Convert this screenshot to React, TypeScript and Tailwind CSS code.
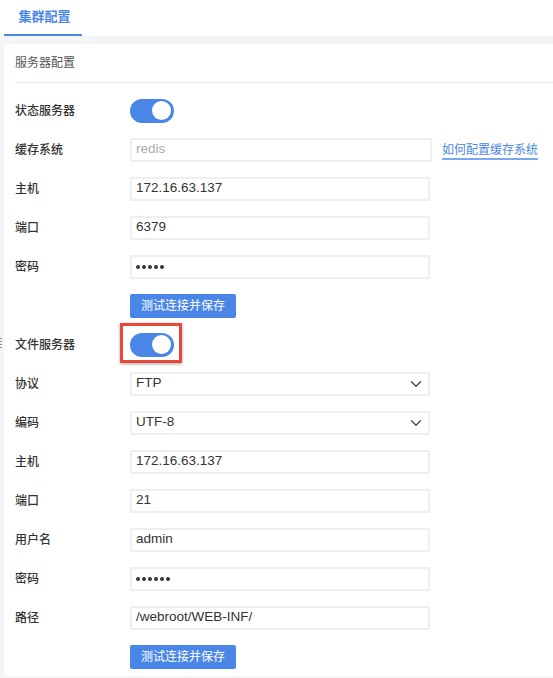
import { ChevronDown } from 'lucide-react'

const font = { fontFamily: '"Liberation Sans", "Noto Sans CJK SC", sans-serif' }

function Toggle() {
  return (
    <div className="flex h-[24px] w-[44px] items-center justify-end rounded-full bg-[#4a86e8] px-[3px]">
      <div className="h-[19px] w-[19px] rounded-full bg-white" />
    </div>
  )
}

function Row({ label, children }: { label: string; children: React.ReactNode }) {
  return (
    <div className="flex h-[39px] items-center">
      <div className="w-[115px] text-[12px] font-medium text-[#333]">{label}</div>
      {children}
    </div>
  )
}

function Field({ value, muted, wide }: { value: string; muted?: boolean; wide?: boolean }) {
  return (
    <div
      className={`flex h-[24px] items-center border-2 border-[#efefef] px-[4px] text-[13.5px] ${wide ? 'w-[302px]' : 'w-[300px]'} ${muted ? 'text-[#aaa]' : 'text-[#333]'}`}
    >
      {value}
    </div>
  )
}

function Dots({ n }: { n: number }) {
  return (
    <div className="flex h-[24px] w-[300px] items-center gap-[2px] border-2 border-[#efefef] px-[4px]">
      {Array.from({ length: n }).map((_, i) => (
        <span key={i} className="h-[4px] w-[4px] rounded-full bg-[#333]" />
      ))}
    </div>
  )
}

function Select({ value }: { value: string }) {
  return (
    <div className="flex h-[24px] w-[300px] items-center justify-between border-2 border-[#efefef] pl-[4px] pr-[3px] text-[13.5px] text-[#333]">
      <span>{value}</span>
      <ChevronDown size={18} strokeWidth={1.6} className="text-[#3a4050]" />
    </div>
  )
}

function Btn() {
  return (
    <div className="flex h-[39px] items-center pl-[115px]">
      <div className="flex h-[24px] w-[106px] items-center justify-center rounded-[2px] bg-[#4a86e8] text-[12px] text-white">
        测试连接并保存
      </div>
    </div>
  )
}

export default function App() {
  return (
    <div className="relative h-[678px] w-[553px] overflow-hidden bg-[#f4f5f7]" style={font}>
      <div className="flex h-[36px] bg-white pl-[4px]">
        <div className="flex w-[78px] items-center justify-center border-b-2 border-[#4a86e8] pl-[3px] text-[13px] font-bold text-[#4a86e8]">
          集群配置
        </div>
      </div>
      <div className="ml-[4px] mt-[8px] bg-white pl-[11px]">
        <div className="flex h-[39px] items-center border-b border-[#e8e8e8] text-[12px] text-[#555]">
          服务器配置
        </div>
        <div className="pt-[8px]">
          <Row label="状态服务器">
            <Toggle />
          </Row>
          <Row label="缓存系统">
            <Field value="redis" muted wide />
            <span className="ml-[10px] mt-[4px] border-b-2 border-[#7aa7ee] text-[12px] leading-[15px] text-[#4a86e8]">
              如何配置缓存系统
            </span>
          </Row>
          <Row label="主机">
            <Field value="172.16.63.137" />
          </Row>
          <Row label="端口">
            <Field value="6379" />
          </Row>
          <Row label="密码">
            <Dots n={5} />
          </Row>
          <Btn />
          <Row label="文件服务器">
            <div className="relative">
              <Toggle />
              <div className="absolute -left-[10px] -top-[10px] h-[40px] w-[62px] border-[3px] border-[#e8483a] shadow-[0_1px_3px_rgba(0,0,0,0.35)]" />
            </div>
          </Row>
          <Row label="协议">
            <Select value="FTP" />
          </Row>
          <Row label="编码">
            <Select value="UTF-8" />
          </Row>
          <Row label="主机">
            <Field value="172.16.63.137" />
          </Row>
          <Row label="端口">
            <Field value="21" />
          </Row>
          <Row label="用户名">
            <Field value="admin" />
          </Row>
          <Row label="密码">
            <Dots n={6} />
          </Row>
          <Row label="路径">
            <Field value="/webroot/WEB-INF/" />
          </Row>
          <Btn />
        </div>
      </div>
      <div className="absolute left-0 top-[338px] flex w-[2px] flex-col gap-[2px]">
        <span className="h-px bg-[#8a8f99]" />
        <span className="h-px bg-[#8a8f99]" />
        <span className="h-px bg-[#8a8f99]" />
        <span className="h-px bg-[#8a8f99]" />
      </div>
    </div>
  )
}
